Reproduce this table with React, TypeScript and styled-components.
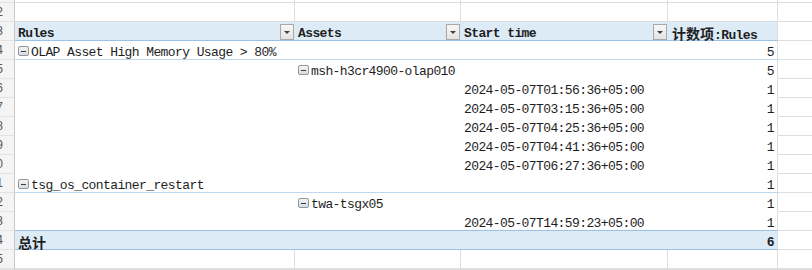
import React from "react";
import styled, { createGlobalStyle, css } from "styled-components";

const GlobalStyle = createGlobalStyle`
  html, body { margin: 0; padding: 0; background: #ffffff; overflow: hidden; }
  #root { width: 812px; height: 270px; overflow: hidden; }
`;

const GRID = "#dedede";
const BLUE_FILL = "#ddebf7";
const BLUE_LINE = "#9bc2e6";
const BLUE_LIGHT = "#bdd7ee";

const Sheet = styled.div`
  display: flex;
  flex-direction: column;
  width: 812px;
  font-family: "Liberation Mono", "Noto Sans CJK SC", monospace;
  font-size: 13px;
  letter-spacing: -0.6px;
  color: #1e1e1e;
`;

const SheetRow = styled.div<{ $h?: number }>`
  display: grid;
  grid-template-columns: 15px 280px 166px 207px 110px 1fr;
  height: ${(p) => p.$h ?? 19}px;
  flex: none;
`;

const RowHead = styled.div`
  box-sizing: border-box;
  display: flex;
  justify-content: flex-end;
  align-items: center;
  overflow: hidden;
  padding-right: 11px;
  background: #f4f4f4;
  border-right: 1px solid #c8c8c8;
  border-bottom: 1px solid #e2e2e2;
  font-family: "Liberation Sans", Arial, sans-serif;
  font-size: 12px;
  letter-spacing: 0;
  color: #555;
  white-space: nowrap;
`;

const PlainCell = styled.div`
  box-sizing: border-box;
  border-right: 1px solid ${GRID};
  border-bottom: 1px solid ${GRID};
`;

const TailCell = styled.div`
  box-sizing: border-box;
  border-bottom: 1px solid ${GRID};
`;

type Tone = "header" | "body" | "total";
type Line = "none" | "light" | "strong";

const PivotCell = styled.div<{ $tone: Tone; $line: Line; $right?: boolean; $edge?: boolean }>`
  box-sizing: border-box;
  min-width: 0;
  display: flex;
  align-items: flex-end;
  justify-content: ${(p) => (p.$right ? "flex-end" : "flex-start")};
  padding: 0 3px;
  white-space: nowrap;
  background: ${(p) => (p.$tone === "body" ? "#ffffff" : BLUE_FILL)};
  font-weight: ${(p) => (p.$tone === "body" ? 400 : 700)};
  border-bottom: 1px solid
    ${(p) =>
      p.$line === "strong" ? BLUE_LINE : p.$line === "light" ? BLUE_LIGHT : p.$tone === "body" ? "#ffffff" : BLUE_FILL};
  ${(p) =>
    p.$edge &&
    css`
      border-right: 1px solid ${GRID};
    `}
`;

const HeaderCell = styled(PivotCell)`
  justify-content: space-between;
  padding-right: 1px;
`;

const Label = styled.span<{ $indent?: number }>`
  line-height: 13px;
  height: 13px;
  margin-left: ${(p) => p.$indent ?? 0}px;
`;

const Cjk = styled.span`
  font-family: "Noto Sans CJK SC", sans-serif;
  font-size: 14px;
  letter-spacing: 0;
  line-height: 13px;
`;

const FilterButton = styled.span`
  box-sizing: border-box;
  flex: none;
  width: 14px;
  height: 16px;
  border: 1px solid #a9a9a9;
  background: linear-gradient(#f7f7f7, #e4e4e4);
  display: flex;
  align-items: center;
  justify-content: center;
  &::after {
    content: "";
    width: 0;
    height: 0;
    border-left: 3px solid transparent;
    border-right: 3px solid transparent;
    border-top: 3px solid #404040;
  }
`;

const CollapseBox = styled.span`
  box-sizing: border-box;
  flex: none;
  width: 11px;
  height: 10px;
  margin: 0 2px 3px 0;
  border: 1px solid #8e969e;
  border-radius: 2px;
  background: linear-gradient(#f4f4f4, #d8dce1);
  display: flex;
  align-items: center;
  justify-content: center;
  &::after {
    content: "";
    width: 5px;
    height: 1px;
    background: #3a3a3a;
  }
`;

type Entry = { text: string; collapse?: boolean };
type Row = {
  n: number;
  kind: "plain" | "header" | "body" | "total";
  line?: Line;
  a?: Entry;
  b?: Entry;
  c?: Entry;
  d?: string;
};

const rows: Row[] = [
  { n: 2, kind: "plain" },
  { n: 3, kind: "header", line: "strong" },
  { n: 4, kind: "body", line: "light", a: { text: "OLAP Asset High Memory Usage > 80%", collapse: true }, d: "5" },
  { n: 5, kind: "body", b: { text: "msh-h3cr4900-olap010", collapse: true }, d: "5" },
  { n: 6, kind: "body", c: { text: "2024-05-07T01:56:36+05:00" }, d: "1" },
  { n: 7, kind: "body", c: { text: "2024-05-07T03:15:36+05:00" }, d: "1" },
  { n: 8, kind: "body", c: { text: "2024-05-07T04:25:36+05:00" }, d: "1" },
  { n: 9, kind: "body", c: { text: "2024-05-07T04:41:36+05:00" }, d: "1" },
  { n: 10, kind: "body", c: { text: "2024-05-07T06:27:36+05:00" }, d: "1" },
  { n: 11, kind: "body", line: "light", a: { text: "tsg_os_container_restart", collapse: true }, d: "1" },
  { n: 12, kind: "body", b: { text: "twa-tsgx05", collapse: true }, d: "1" },
  { n: 13, kind: "body", line: "strong", c: { text: "2024-05-07T14:59:23+05:00" }, d: "1" },
  { n: 14, kind: "total", line: "strong", d: "6" },
  { n: 15, kind: "plain" },
];

const EntryView = ({ e }: { e?: Entry }) =>
  e ? (
    <>
      {e.collapse && <CollapseBox />}
      <Label>{e.text}</Label>
    </>
  ) : null;

const PlainRow = ({ n, h }: { n?: number; h?: number }) => (
  <SheetRow $h={h}>
    <RowHead>{n}</RowHead>
    <PlainCell />
    <PlainCell />
    <PlainCell />
    <PlainCell />
    <TailCell />
  </SheetRow>
);

const HeaderRow = ({ r }: { r: Row }) => (
  <SheetRow>
    <RowHead>{r.n}</RowHead>
    <HeaderCell $tone="header" $line="strong">
      <Label>Rules</Label>
      <FilterButton />
    </HeaderCell>
    <HeaderCell $tone="header" $line="strong">
      <Label>Assets</Label>
      <FilterButton />
    </HeaderCell>
    <HeaderCell $tone="header" $line="strong">
      <Label>Start time</Label>
      <FilterButton />
    </HeaderCell>
    <PivotCell $tone="header" $line="strong" $edge>
      <Label $indent={1}>
        <Cjk>计数项</Cjk>:Rules
      </Label>
    </PivotCell>
    <TailCell />
  </SheetRow>
);

const BodyRow = ({ r }: { r: Row }) => {
  const tone: Tone = r.kind === "total" ? "total" : "body";
  const line: Line = r.line ?? "none";
  return (
    <SheetRow>
      <RowHead>{r.n}</RowHead>
      <PivotCell $tone={tone} $line={line}>
        {r.kind === "total" ? (
          <Label>
            <Cjk>总计</Cjk>
          </Label>
        ) : (
          <EntryView e={r.a} />
        )}
      </PivotCell>
      <PivotCell $tone={tone} $line={line}>
        <EntryView e={r.b} />
      </PivotCell>
      <PivotCell $tone={tone} $line={line}>
        <EntryView e={r.c} />
      </PivotCell>
      <PivotCell $tone={tone} $line={line} $right $edge>
        <Label>{r.d}</Label>
      </PivotCell>
      <TailCell />
    </SheetRow>
  );
};

export default function App() {
  return (
    <>
      <GlobalStyle />
      <Sheet>
        <PlainRow h={3} />
        {rows.map((r) => {
          if (r.kind === "plain") return <PlainRow key={r.n} n={r.n} />;
          if (r.kind === "header") return <HeaderRow key={r.n} r={r} />;
          return <BodyRow key={r.n} r={r} />;
        })}
        <PlainRow h={1} />
      </Sheet>
    </>
  );
}
